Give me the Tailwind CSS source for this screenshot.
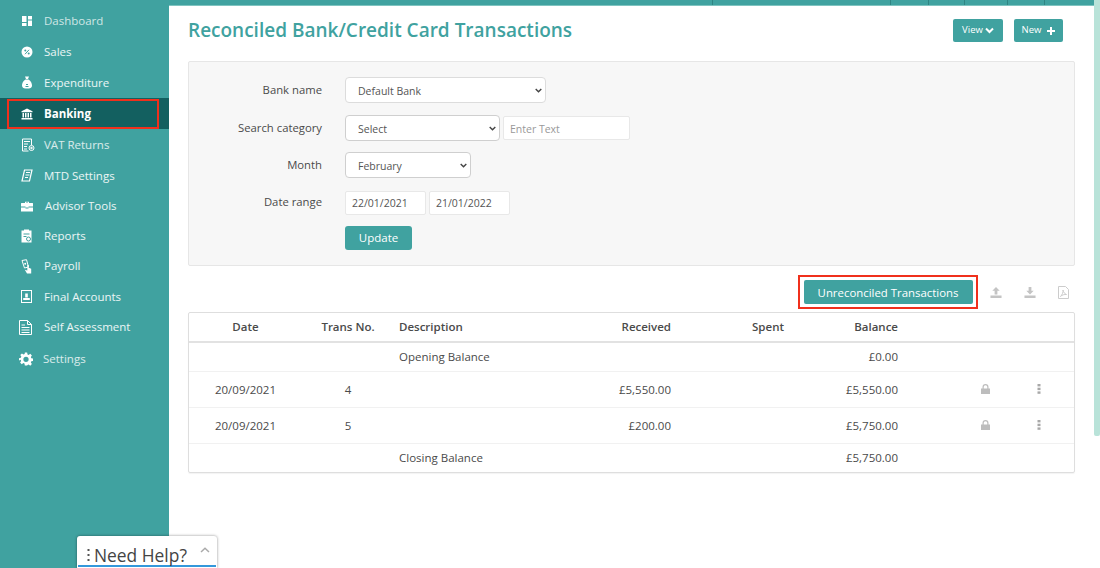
<!DOCTYPE html>
<html lang="en">
<head>
<meta charset="UTF-8">
<title>Reconciled Bank/Credit Card Transactions</title>
<script src="https://cdn.jsdelivr.net/npm/@tailwindcss/browser@4"></script>
</head>
<body class="font-['Open_Sans',sans-serif] bg-white text-[#444] overflow-hidden">
<div class="relative flex h-[568px] w-[1100px] overflow-hidden">

  <!-- Sidebar -->
  <aside class="w-[169px] shrink-0 bg-[#40a2a0] pt-[5px] text-[11.5px] text-white/90">
    <a class="flex h-[31px] items-center pl-[21px] gap-[11px]">
      <svg class="w-[12px] h-[12px]" viewBox="0 0 12 12" fill="#fff"><rect x="1" y="1" width="4.5" height="6"/><rect x="7" y="1" width="4" height="3.5"/><rect x="1" y="8" width="4.5" height="3"/><rect x="7" y="5.5" width="4" height="5.5"/></svg>
      <span class="text-white/75">Dashboard</span></a>
    <a class="flex h-[31px] items-center pl-[21px] gap-[11px]">
      <svg class="w-[12px] h-[12px]" viewBox="0 0 12 12"><circle cx="6" cy="6" r="5.5" fill="#fff"/><path d="M4 8.2 8 3.8" stroke="#40a2a0" stroke-width="1"/><circle cx="4.3" cy="4.5" r="1" fill="#40a2a0"/><circle cx="7.7" cy="7.5" r="1" fill="#40a2a0"/></svg>
      <span>Sales</span></a>
    <a class="flex h-[31px] items-center pl-[21px] gap-[11px]">
      <svg class="w-[12px] h-[13px]" viewBox="0 0 12 13" fill="#fff"><path d="M4 0.5h4L7 3H5zM4.5 3.5h3C10 5 11 7.5 11 9.5 11 12 9 12.5 6 12.5S1 12 1 9.5C1 7.5 2 5 4.5 3.5z"/><path d="M4.5 10.5h3M5 8.5h2" stroke="#40a2a0" stroke-width="1"/></svg>
      <span>Expenditure</span></a>
    <div class="relative flex h-[31px] items-center pl-[21px] gap-[11px] bg-[#136060] font-bold text-white">
      <svg class="w-[12px] h-[12px]" viewBox="0 0 12 12" fill="#fff"><path d="M6 0.5 11.5 3.3v1H0.5v-1zM1.5 5h1.5v4.5H1.5zM4 5h1.5v4.5H4zM6.5 5H8v4.5H6.5zM9 5h1.5v4.5H9zM0.5 10h11v1.5H.5z"/></svg>
      <span>Banking</span>
      <div class="absolute left-[7px] top-[1px] h-[30px] w-[152px] border-2 border-[#f0301c]"></div>
    </div>
    <a class="flex h-[31px] items-center pl-[21px] gap-[9px]">
      <svg class="w-[14px] h-[14px]" viewBox="0 0 14 14" fill="none" stroke="#fff" stroke-width="1"><path d="M1.5 1h9v6M1.5 1v12h6M3 3.5h6M3 6h4M3 8.5h3M3 11h3"/><circle cx="10.5" cy="10" r="2.5"/><circle cx="10.5" cy="10" r=".8" fill="#fff"/></svg>
      <span class="text-white/80">VAT Returns</span></a>
    <a class="flex h-[31px] items-center pl-[21px] gap-[11px]">
      <svg class="w-[12px] h-[13px]" viewBox="0 0 12 13" fill="none" stroke="#fff" stroke-width="1.2"><path d="M3.5 1h7.5L8.5 12H1zM5 3.5h4M4.500 6h4M4 8.500h3"/></svg>
      <span>MTD Settings</span></a>
    <a class="flex h-[30px] items-center pl-[21px] gap-[12px]">
      <svg class="w-[12px] h-[11px]" viewBox="0 0 12 11" fill="#fff"><path d="M4 2V.8h4V2h3.5a.5.5 0 0 1 .5.5V5.500H7.500v1h-3v-1H0V2.500A.5.5 0 0 1 .5 2zM5 2h2v-.4H5zM0 6.500h4.500v1h3v-1H12V10.500H0z"/></svg>
      <span>Advisor Tools</span></a>
    <a class="flex h-[30px] items-center pl-[21px] gap-[12px]">
      <svg class="w-[11px] h-[14px]" viewBox="0 0 11 14" fill="#fff"><path d="M0.500 1.500H3V.5h5v1h2.500V13.500H.5zM2.500 4.500v1h6v-1zM2.500 7v1h3V7z"/><circle cx="7.500" cy="10" r="2" fill="none" stroke="#40a2a0"/></svg>
      <span>Reports</span></a>
    <a class="flex h-[30px] items-center pl-[21px] gap-[12px]">
      <svg class="w-[11px] h-[15px]" viewBox="0 0 11 15" fill="none"><path d="M1 1.500 5.500.7 7.500 8 3.500 9z" stroke="#fff"/><circle cx="4.200" cy="4.800" r="1" fill="#fff"/><path d="M6.300 6h1.400v2.800l2.500 1v4.700H6L3.800 10.800l2.500.7z" fill="#fff"/></svg>
      <span>Payroll</span></a>
    <a class="flex h-[31px] items-center pl-[21px] gap-[12px]">
      <svg class="w-[11px] h-[13px]" viewBox="0 0 11 13" fill="none" stroke="#fff" stroke-width="1"><rect x=".5" y=".5" width="10" height="12"/><path d="M2.500 9.500h6V8.500h-6z" fill="#fff"/><rect x="4.200" y="3.500" width="2.600" height="4" fill="#fff" stroke="none"/></svg>
      <span>Final Accounts</span></a>
    <a class="flex h-[30px] items-center pl-[19px] gap-[12px]">
      <svg class="w-[13px] h-[15px]" viewBox="0 0 13 15" fill="none" stroke="#fff" stroke-width="1"><path d="M.5.5h8l4 4v10H.5zM8.500.5v4h4M2.500 5H6M2.500 7.500h8M2.500 10h8M2.500 12.500h8"/></svg>
      <span>Self Assessment</span></a>
    <a class="flex h-[33px] items-center pl-[19px] gap-[10px]">
      <svg class="w-[14px] h-[14px]" viewBox="0 0 24 24" fill="#fff"><path fill-rule="evenodd" d="M10 1h4l.6 3.200 2 .8L19.300 3.200l2.800 2.800-1.800 2.700.8 2 3.200.6v4l-3.200.6-.8 2 1.800 2.700-2.800 2.800-2.700-1.800-2 .8L14 23h-4l-.6-3.200-2-.8-2.700 1.800-2.800-2.800 1.800-2.700-.8-2L0 14.500v-4l3.200-.6.800-2L2.200 5.200 5 2.400l2.700 1.800 2-.8zM12 8a4.500 4.500 0 1 0 0 9 4.500 4.500 0 0 0 0-9z"/></svg>
      <span class="text-white/80">Settings</span></a>
  </aside>

  <!-- Main -->
  <main class="flex-1 min-w-0">
    <div class="flex h-[6px] border-b border-[#7fc4c0] bg-[#40a2a0] pl-[543px]">
      <i class="w-[178px] border-l border-[#2f8583]"></i><i class="w-[38px] border-l border-[#2f8583]"></i><i class="w-[36px] border-l border-[#2f8583]"></i><i class="w-[43px] border-l border-[#2f8583]"></i><i class="w-[37px] border-l border-[#2f8583]"></i><i class="w-[40px] border-l border-[#2f8583]"></i>
    </div>
    <div class="ml-[19px] w-[887px]">
      <div class="flex items-start justify-between pt-[12px]">
        <h1 class="text-[19px] leading-[24px] font-semibold text-[#40a2a0]">Reconciled Bank/Credit Card Transactions</h1>
        <div class="flex gap-[11px] pr-[12px] pt-[1px]">
          <button class="flex h-[23px] w-[50px] items-center justify-center gap-[2px] rounded-[2px] bg-[#40a2a0] text-[9.5px] text-white">View
            <svg class="w-[9px] h-[7px]" viewBox="0 0 9 7" fill="none" stroke="#fff" stroke-width="2"><path d="M1 1.500 4.500 5 8 1.500"/></svg></button>
          <button class="flex h-[23px] w-[49px] items-center justify-center gap-[6px] rounded-[2px] bg-[#40a2a0] text-[9.5px] text-white">New
            <svg class="w-[8px] h-[8px]" viewBox="0 0 8 8" fill="#fff"><path d="M3 0h2v3h3v2H5v3H3V5H0V3h3z"/></svg></button>
        </div>
      </div>

      <!-- Filter panel -->
      <section class="mt-[19px] h-[205px] rounded-[2px] border border-[#e6e6e6] bg-[#f7f7f7] pt-[15px] text-[11.3px]">
        <div class="flex h-[26px] items-center">
          <label class="w-[133px] pt-[1px] text-right text-[#4a4a4a]">Bank name</label>
          <div class="relative ml-[23px] w-[201px]">
            <select class="h-[26px] w-full appearance-none rounded-[4px] border border-[#dcdcdc] bg-white pl-[12px] pt-[4px] text-[10.5px] text-[#555]"><option>Default Bank</option></select>
            <svg class="pointer-events-none absolute right-[4px] top-[11px] w-[7px] h-[5px]" viewBox="0 0 7 5" fill="none" stroke="#444" stroke-width="1.400"><path d="M.7 1 3.500 3.800 6.300 1"/></svg>
          </div>
        </div>
        <div class="mt-[12px] flex h-[26px] items-center">
          <label class="w-[133px] pt-[1px] text-right text-[#4a4a4a]">Search category</label>
          <div class="relative ml-[23px] w-[155px]">
            <select class="h-[26px] w-full appearance-none rounded-[4px] border border-[#cfcfcf] bg-white pl-[12px] pt-[4px] text-[10.5px] text-[#555]"><option>Select</option></select>
            <svg class="pointer-events-none absolute right-[4px] top-[11px] w-[7px] h-[5px]" viewBox="0 0 7 5" fill="none" stroke="#444" stroke-width="1.400"><path d="M.7 1 3.500 3.800 6.300 1"/></svg>
          </div>
          <input class="ml-[3px] h-[24px] w-[127px] rounded-[2px] border border-[#e8e8e8] bg-white pl-[6px] pt-[1px] text-[10.5px] placeholder:text-[#999]" placeholder="Enter Text">
        </div>
        <div class="mt-[11px] flex h-[26px] items-center">
          <label class="w-[133px] pt-[1px] text-right text-[#4a4a4a]">Month</label>
          <div class="relative ml-[23px] w-[126px]">
            <select class="h-[26px] w-full appearance-none rounded-[4px] border border-[#cfcfcf] bg-white pl-[12px] pt-[4px] text-[10.5px] text-[#555]"><option>February</option></select>
            <svg class="pointer-events-none absolute right-[4px] top-[11px] w-[7px] h-[5px]" viewBox="0 0 7 5" fill="none" stroke="#444" stroke-width="1.400"><path d="M.7 1 3.500 3.800 6.300 1"/></svg>
          </div>
        </div>
        <div class="mt-[12px] flex h-[25px] items-center">
          <label class="w-[133px] text-right text-[#4a4a4a]">Date range</label>
          <input class="ml-[23px] h-[24px] w-[81px] rounded-[2px] border border-[#e8e8e8] bg-white pl-[6px] text-[10.5px] text-[#555]" value="22/01/2021">
          <input class="ml-[3px] h-[24px] w-[81px] rounded-[2px] border border-[#e8e8e8] bg-white pl-[6px] text-[10.5px] text-[#555]" value="21/01/2022">
        </div>
        <button class="ml-[156px] mt-[11px] h-[24px] w-[67px] rounded-[3px] bg-[#40a2a0] text-[11.5px] text-white">Update</button>
      </section>

      <!-- Table actions -->
      <div class="mt-[9px] flex h-[35px] items-center pl-[610px]">
        <div class="flex h-[34px] w-[180px] items-center justify-center self-start border-2 border-[#f0301c]">
          <button class="h-[24px] w-[169px] rounded-[2px] bg-[#40a2a0] pt-[1px] text-[11.4px] text-white">Unreconciled Transactions</button>
        </div>
        <svg class="ml-[12px] w-[12px] h-[11px]" viewBox="0 0 13 13" preserveAspectRatio="none" fill="#c4c4c4"><path d="M6.500 0 10.500 4.500H8V9H5V4.500H2.500zM.5 10h12v3H.5z"/></svg>
        <svg class="ml-[22px] w-[12px] h-[11px]" viewBox="0 0 13 13" preserveAspectRatio="none" fill="#c4c4c4"><path d="M5 0h3v4.500h2.500L6.500 9 2.500 4.500H5zM.5 10h12v3H.5z"/></svg>
        <svg class="ml-[22px] w-[11px] h-[13px]" viewBox="0 0 11 13" fill="none" stroke="#cccccc"><path d="M.5.5h7l3 3v9H.5zM2.500 10.500C4 9 5.500 6 5 4c.5 2.500 1.500 3.500 3.500 4.500-2-.2-4.500.3-6 2z"/></svg>
      </div>

      <!-- Transactions -->
      <div class="mt-[2px] h-[161px] rounded-[2px] border border-[#dedede] text-[11.5px] text-[#4a4a4a] shadow-[0_1px_1px_rgba(0,0,0,0.05)]">
        <table class="w-full table-fixed border-collapse">
          <colgroup><col class="w-[113px]"><col class="w-[97px]"><col class="w-[150px]"><col class="w-[122px]"><col class="w-[113px]"><col class="w-[114px]"><col class="w-[86px]"><col></colgroup>
          <thead>
            <tr class="h-[29px] border-b-2 border-[#e2e2e2]">
              <th class="text-center font-semibold">Date</th><th class="text-center font-semibold pr-[5px]">Trans No.</th><th class="text-left font-semibold">Description</th><th class="text-right font-semibold">Received</th><th class="text-right font-semibold">Spent</th><th class="text-right font-semibold">Balance</th><th></th><th></th>
            </tr>
          </thead>
          <tbody>
            <tr class="h-[29px] border-b border-[#f1f1f1]">
              <td></td><td></td><td>Opening Balance</td><td></td><td></td><td class="text-right">£0.00</td><td></td><td></td>
            </tr>
            <tr class="h-[36px] border-b border-[#f1f1f1]">
              <td class="text-center pt-[1px]">20/09/2021</td><td class="text-center pr-[5px] pt-[1px]">4</td><td></td><td class="text-right pt-[1px]">£5,550.00</td><td></td><td class="text-right pt-[1px]">£5,550.00</td>
              <td><svg class="ml-[83px] w-[9px] h-[10px]" viewBox="0 0 9 10" fill="#bdbdbd"><path d="M0 4.500h9v5.500h-9zM1.500 4.500V3a3 3 0 0 1 6 0v1.500H6.300V3a1.800 1.800 0 0 0-3.600 0v1.500z"/></svg></td>
              <td><svg class="ml-[53px] w-[4px] h-[10px]" viewBox="0 0 4 10" fill="#a8a8a8"><rect x=".5" width="3" height="2.400"/><rect x=".5" y="3.700" width="3" height="2.400"/><rect x=".5" y="7.400" width="3" height="2.400"/></svg></td>
            </tr>
            <tr class="h-[36px] border-b border-[#f1f1f1]">
              <td class="text-center pt-[1px]">20/09/2021</td><td class="text-center pr-[5px] pt-[1px]">5</td><td></td><td class="text-right pt-[1px]">£200.00</td><td></td><td class="text-right pt-[1px]">£5,750.00</td>
              <td><svg class="ml-[83px] w-[9px] h-[10px]" viewBox="0 0 9 10" fill="#bdbdbd"><path d="M0 4.500h9v5.500h-9zM1.500 4.500V3a3 3 0 0 1 6 0v1.500H6.300V3a1.800 1.800 0 0 0-3.600 0v1.500z"/></svg></td>
              <td><svg class="ml-[53px] w-[4px] h-[10px]" viewBox="0 0 4 10" fill="#a8a8a8"><rect x=".5" width="3" height="2.400"/><rect x=".5" y="3.700" width="3" height="2.400"/><rect x=".5" y="7.400" width="3" height="2.400"/></svg></td>
            </tr>
            <tr class="h-[29px]">
              <td></td><td></td><td>Closing Balance</td><td></td><td></td><td class="text-right">£5,750.00</td><td></td><td></td>
            </tr>
          </tbody>
        </table>
      </div>
    </div>
  </main>

  <!-- Page scrollbar -->
  <div class="absolute right-0 top-0 h-[436px] w-[6px] rounded-b-[2px] bg-[#b9e3d9]"></div>

  <!-- Help widget -->
  <div class="absolute left-[77px] top-[536px] h-[32px] w-[140px] rounded-t-[3px] bg-white shadow-[0_0_3px_rgba(0,0,0,0.45)]">
    <div class="mx-[1px] flex h-[31px] items-center border-b-[2px] border-[#3498db] pl-[9px] pt-[9px]">
      <svg class="w-[3px] h-[12px]" viewBox="0 0 3 12" fill="#555"><rect x=".5" y="0" width="2" height="2"/><rect x=".5" y="5" width="2" height="2"/><rect x=".5" y="10" width="2" height="2"/></svg>
      <span class="ml-[4px] text-[17.4px] leading-[20px] whitespace-nowrap text-[#444]">Need Help?</span>
      <svg class="ml-[13px] -mt-[11px] w-[10px] h-[6px]" viewBox="0 0 10 6" fill="none" stroke="#aaa" stroke-width="1.500"><path d="M1 5 5 1.300 9 5"/></svg>
    </div>
  </div>
</div>
</body>
</html>
